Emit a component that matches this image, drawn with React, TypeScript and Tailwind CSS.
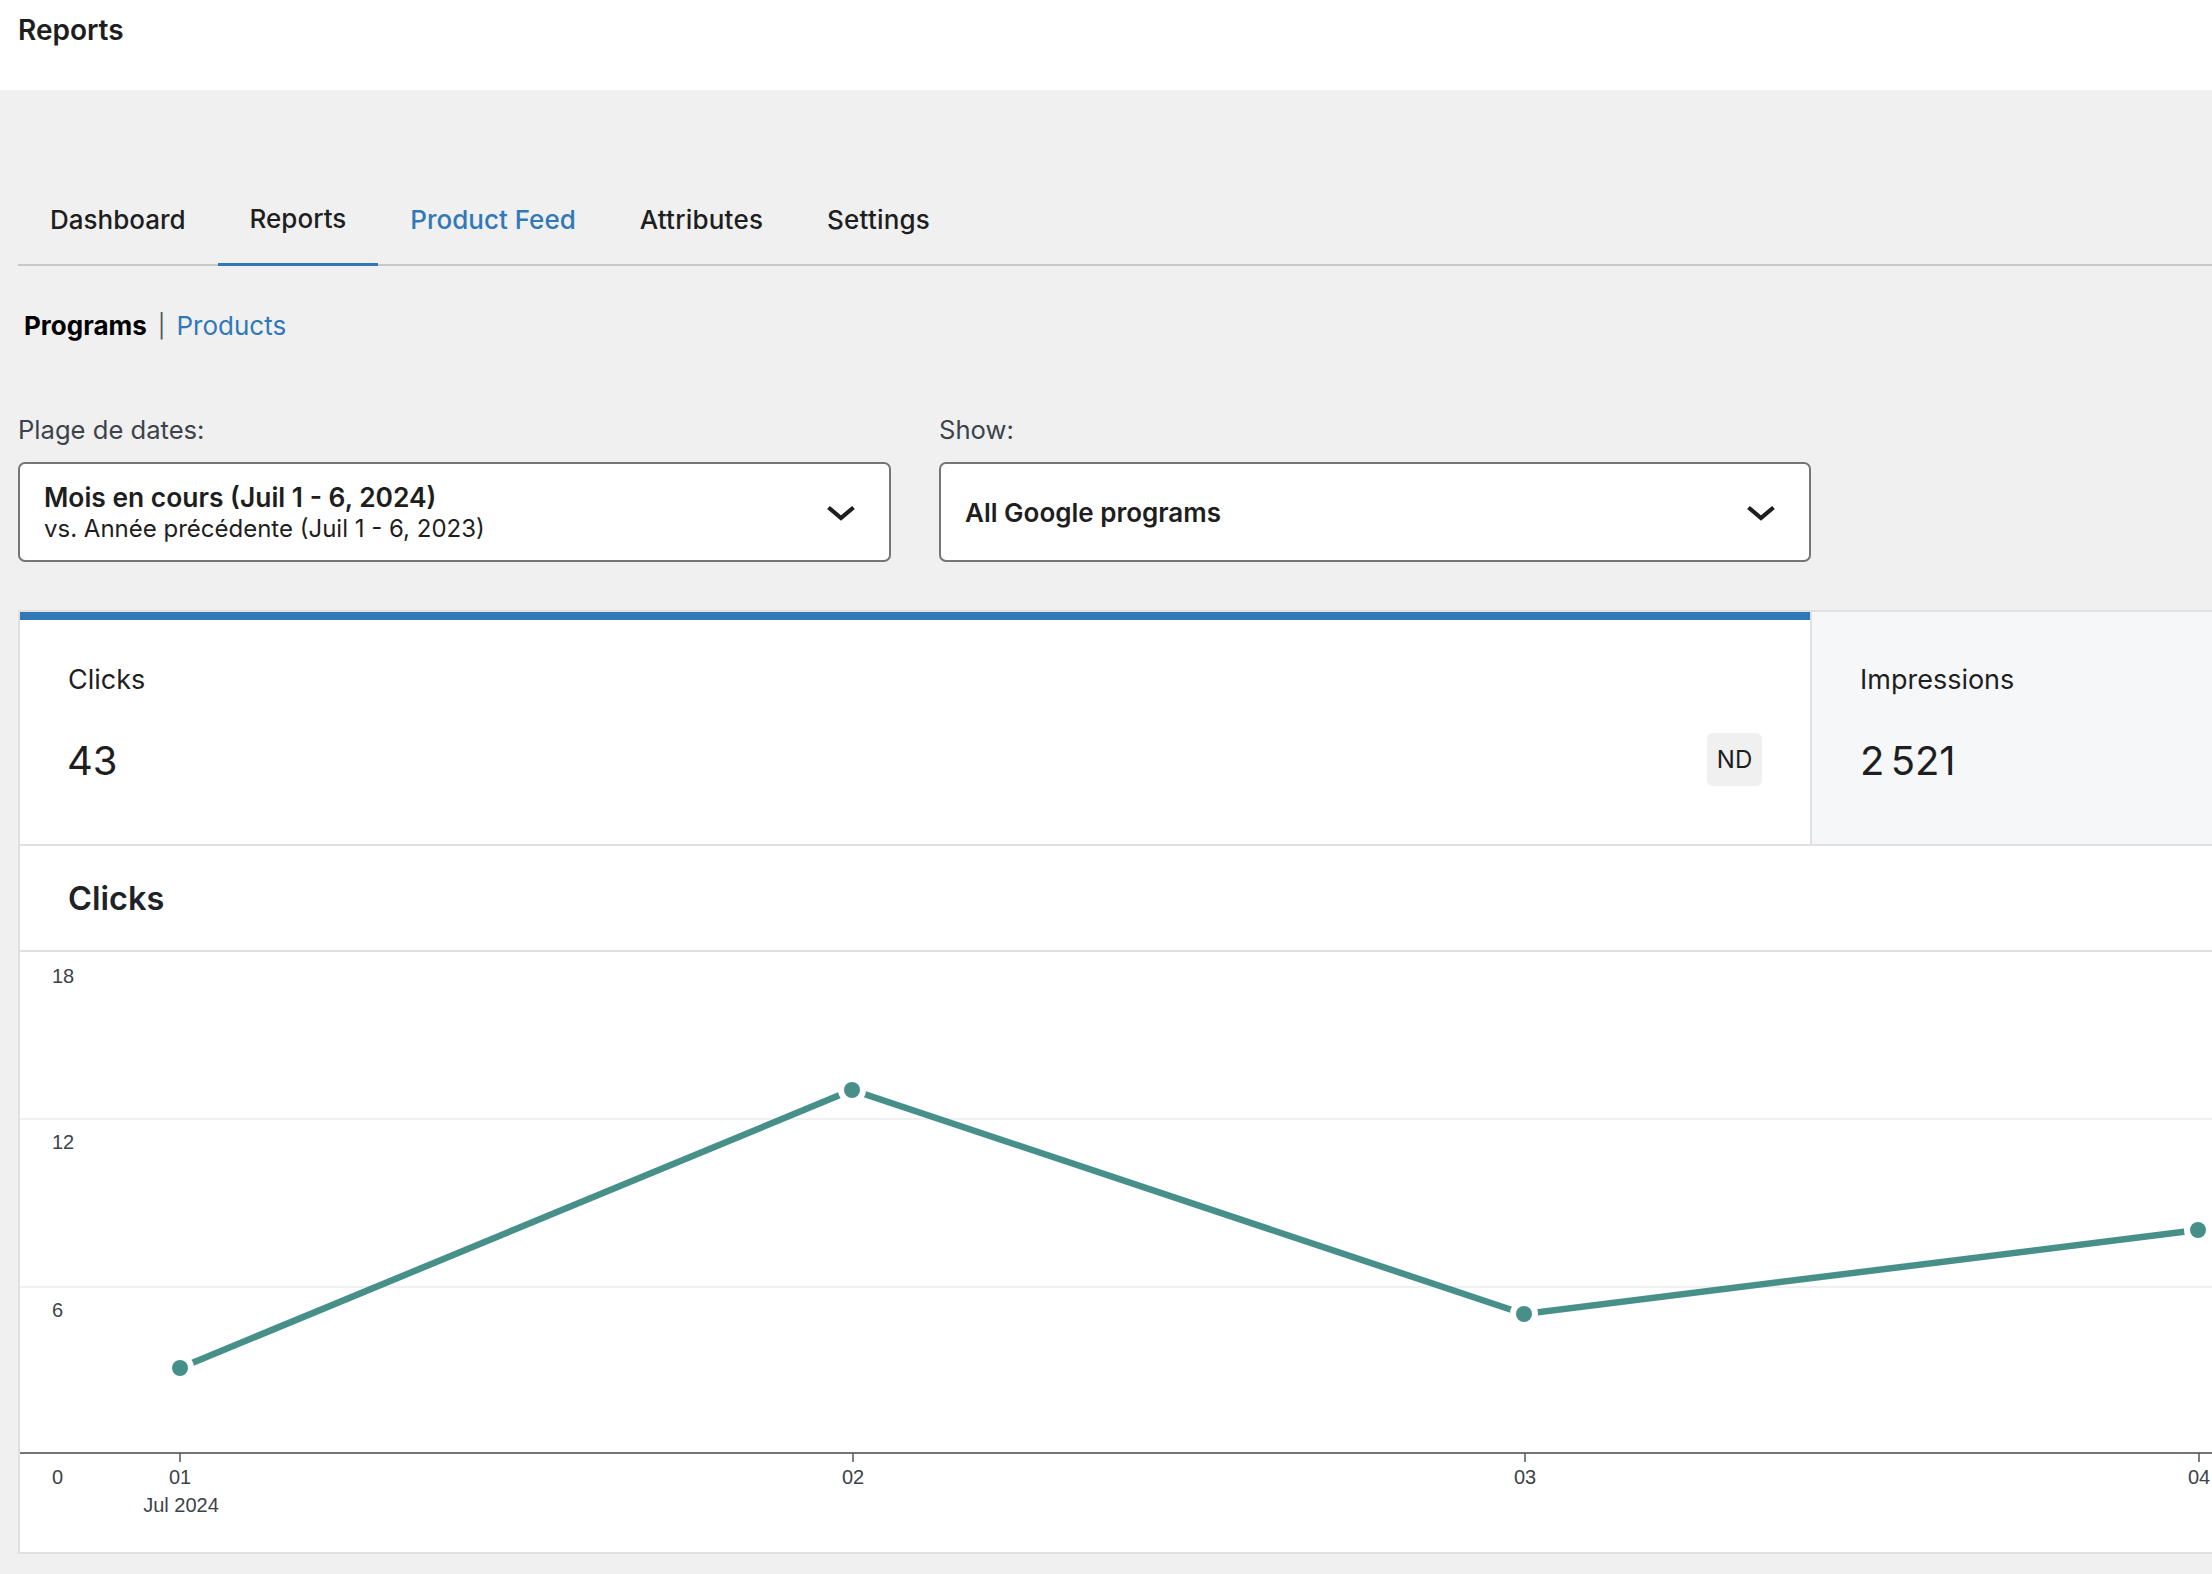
import type { ReactNode } from "react"

const sans = "font-['Inter','Liberation_Sans',sans-serif]"

const tabs = [
  { label: "Dashboard", cls: "text-[#1e1e1e]" },
  { label: "Reports", cls: "text-[#1e1e1e] border-[#3079b6] border-b-[3px] -mb-[1px]" },
  { label: "Product Feed", cls: "text-[#3079b6]" },
  { label: "Attributes", cls: "text-[#1e1e1e] tracking-[0.2px]" },
  { label: "Settings", cls: "text-[#1e1e1e] tracking-[0.2px]" },
]

const points = [
  { x: 180, y: 416 },
  { x: 852, y: 138 },
  { x: 1524, y: 362 },
  { x: 2198, y: 278 },
]

const yTicks = [
  { label: "18", y: 24 },
  { label: "12", y: 190 },
  { label: "6", y: 358 },
  { label: "0", y: 525 },
]

const xTicks = [
  { label: "01", x: 180 },
  { label: "02", x: 853 },
  { label: "03", x: 1525 },
  { label: "04", x: 2199 },
]

function Chevron() {
  return (
    <svg width="28" height="17" viewBox="0 0 28 17" fill="none" className="mt-[3px] shrink-0">
      <path d="M1.5 2.5 14 13 26.5 2.5" stroke="#1e1e1e" strokeWidth="4.2" />
    </svg>
  )
}

function SelectBox({ width, children }: { width: string; children: ReactNode }) {
  return (
    <div
      className={`flex h-[100px] ${width} items-center justify-between rounded-[7px] border-2 border-[#757575] bg-white pr-[34px] pl-[24px] text-[#1e1e1e]`}
    >
      <div className="mt-[2px]">{children}</div>
      <Chevron />
    </div>
  )
}

function ClicksChart() {
  return (
    <svg width="2192" height="600" viewBox="20 0 2192 600" className="block">
      <line x1="18" x2="2212" y1="167" y2="167" stroke="#f0f0f0" strokeWidth="2" />
      <line x1="18" x2="2212" y1="335" y2="335" stroke="#f0f0f0" strokeWidth="2" />
      <line x1="18" x2="2212" y1="501" y2="501" stroke="#757575" strokeWidth="2" />
      <polyline
        points={points.map((p) => `${p.x},${p.y}`).join(" ")}
        fill="none"
        stroke="#47908a"
        strokeWidth="6.5"
      />
      {points.map((p) => (
        <g key={p.x}>
          <circle cx={p.x} cy={p.y} r="14" fill="#fff" />
          <circle cx={p.x} cy={p.y} r="8" fill="#47908a" />
        </g>
      ))}
      {xTicks.map((t) => (
        <line key={t.x} x1={t.x} x2={t.x} y1="501" y2="510" stroke="#50575e" strokeWidth="1.5" />
      ))}
      <g fontFamily="'Liberation Sans', Arial, sans-serif" fontSize="20" fill="#3c434a">
        {yTicks.map((t) => (
          <text key={t.label} x="52" y={t.y + 7}>
            {t.label}
          </text>
        ))}
        {xTicks.map((t) => (
          <text key={t.x} x={t.x} y="532" textAnchor="middle">
            {t.label}
          </text>
        ))}
        <text x="181" y="560" textAnchor="middle">
          Jul 2024
        </text>
      </g>
    </svg>
  )
}

export default function App() {
  return (
    <div className={`h-[1574px] w-[2212px] overflow-hidden bg-[#f0f0f1] ${sans}`}>
      <div className="h-[90px] bg-white pt-[12px] pl-[18px] text-[28px] leading-[36px] font-semibold text-[#1e1e1e]">
        Reports
      </div>

      <div className="pt-[99px] pl-[18px]">
        <div className="flex h-[77px] border-b-2 border-[#c8c8c8]">
          {tabs.map((tab) => (
            <div
              key={tab.label}
              className={`flex h-[77px] items-center px-[32px] pb-[16px] text-[26px] font-medium ${tab.cls}`}
            >
              {tab.label}
            </div>
          ))}
        </div>

        <div className="mt-[42px] flex h-[36px] items-center pl-[6px] text-[26px] leading-[36px]">
          <span className="font-bold text-black">Programs</span>
          <span className="ml-[11px] text-[23px] text-[#50575e]">|</span>
          <span className="ml-[11px] text-[#3079b6]">Products</span>
        </div>

        <div className="mt-[68px] flex gap-[48px]">
          <div>
            <div className="mb-[14px] text-[25.6px] leading-[36px] text-[#3c434a]">Plage de dates:</div>
            <SelectBox width="w-[873px]">
              <div className="text-[26.4px] leading-[32px] font-semibold">Mois en cours (Juil 1 - 6, 2024)</div>
              <div className="text-[24px] leading-[32px]">vs. Année précédente (Juil 1 - 6, 2023)</div>
            </SelectBox>
          </div>
          <div>
            <div className="mb-[14px] text-[25.6px] leading-[36px] text-[#3c434a]">Show:</div>
            <SelectBox width="w-[872px]">
              <div className="text-[26px] leading-[32px] font-semibold">All Google programs</div>
            </SelectBox>
          </div>
        </div>

        <div className="mt-[48px] border-y-2 border-l-2 border-[#e0e0e0] bg-white">
          <div className="flex h-[232px]">
            <div className="relative w-[1790px] border-t-[8px] border-[#3079b6] pt-[40px] pl-[48px] text-[#1e1e1e]">
              <div className="text-[27px] leading-[40px]">Clicks</div>
              <div className="mt-[36px] -ml-[1px] text-[40px] leading-[50px]">43</div>
              <div className="absolute top-[113px] right-[48px] flex h-[53px] w-[55px] items-center justify-center rounded-[6px] bg-[#f0f0f0] text-[24px]">
                ND
              </div>
            </div>
            <div className="flex-1 border-l-2 border-[#e0e0e0] bg-[#f6f7f9] pt-[48px] pl-[48px] text-[#1e1e1e]">
              <div className="text-[27px] leading-[40px]">Impressions</div>
              <div className="mt-[36px] text-[40px] leading-[50px] [word-spacing:-5px]">2 521</div>
            </div>
          </div>
          <div className="flex h-[108px] items-center border-y-2 border-[#e0e0e0] pt-[3px] pl-[48px] text-[32.5px] font-semibold text-[#1d2327]">
            Clicks
          </div>
          <ClicksChart />
        </div>
      </div>
    </div>
  )
}
